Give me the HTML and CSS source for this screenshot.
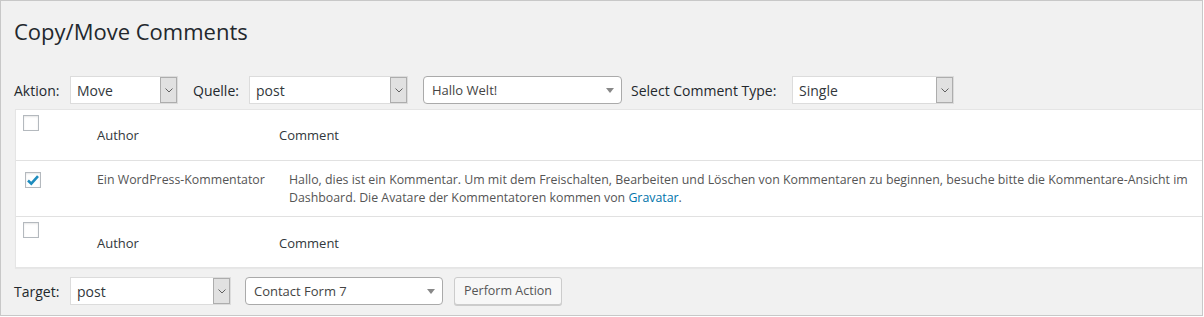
FILE: index.html
```html
<!DOCTYPE html>
<html lang="de">

<head>
    <meta charset="UTF-8">
    <title>Copy/Move Comments</title>
    <link rel="stylesheet" href="styles.css">
</head>

<body>

    <div class="wrap">
        <h1>Copy/Move Comments</h1>

        <div class="toolbar top">
            <label class="lbl lbl-aktion">Aktion:</label>
            <div class="select w-move"><span>Move</span><span class="arrow"><svg width="8" height="5" viewBox="0 0 8 5"><path d="M0.5 0.5 L4 4 L7.5 0.5" fill="none" stroke="#606060" stroke-width="1"/></svg></span></div>

            <label class="lbl lbl-quelle">Quelle:</label>
            <div class="select w-post"><span>post</span><span class="arrow"><svg width="8" height="5" viewBox="0 0 8 5"><path d="M0.5 0.5 L4 4 L7.5 0.5" fill="none" stroke="#606060" stroke-width="1"/></svg></span></div>

            <div class="select2 w-hallo"><span>Hallo Welt!</span><span class="tri"></span></div>

            <label class="lbl lbl-type">Select Comment Type:</label>
            <div class="select w-single"><span>Single</span><span class="arrow"><svg width="8" height="5" viewBox="0 0 8 5"><path d="M0.5 0.5 L4 4 L7.5 0.5" fill="none" stroke="#606060" stroke-width="1"/></svg></span></div>
        </div>

        <div class="table">
            <div class="row head">
                <div class="cell check"><span class="box"></span></div>
                <div class="cell author">Author</div>
                <div class="cell comment">Comment</div>
            </div>
            <div class="row item">
                <div class="cell check"><span class="box checked"><svg width="14" height="12" viewBox="0 0 14 12"><path d="M2 6.5 L5.3 9.6 L12 2.2" fill="none" stroke="#1e8cbe" stroke-width="2.6"/></svg></span></div>
                <div class="cell author">Ein WordPress-Kommentator</div>
                <div class="cell comment">Hallo, dies ist ein Kommentar. Um mit dem Freischalten, Bearbeiten und Löschen von Kommentaren zu beginnen, besuche bitte die Kommentare-Ansicht im Dashboard. Die Avatare der Kommentatoren kommen von <a href="#">Gravatar</a>.</div>
            </div>
            <div class="row foot">
                <div class="cell check"><span class="box"></span></div>
                <div class="cell author">Author</div>
                <div class="cell comment">Comment</div>
            </div>
        </div>

        <div class="toolbar bottom">
            <label class="lbl lbl-target">Target:</label>
            <div class="select w-target"><span>post</span><span class="arrow"><svg width="8" height="5" viewBox="0 0 8 5"><path d="M0.5 0.5 L4 4 L7.5 0.5" fill="none" stroke="#606060" stroke-width="1"/></svg></span></div>

            <div class="select2 w-form"><span>Contact Form 7</span><span class="tri"></span></div>

            <button class="action">Perform Action</button>
        </div>
    </div>

</body>

</html>
```

FILE: styles.css
```css
html {
    font-family: "Open Sans", "Noto Sans", sans-serif;
}

body {
    margin: 0;
    background: #ffffff;
}

.wrap {
    width: 1203px;
    height: 316px;
    box-sizing: border-box;
    border: 1px solid #c8c8c8;
    background: #f1f1f1;
    overflow: hidden;
}

h1 {
    font-size: 22px;
    font-weight: 400;
    color: #23282d;
    line-height: 29px;
    margin: 0;
    padding: 16px 0 0 13px;
}

.toolbar {
    display: flex;
    align-items: center;
    padding-left: 13px;
    color: #23282d;
    font-size: 14px;
}

.top {
    margin-top: 30px;
}

.bottom {
    margin-top: 9px;
}

.lbl {
    white-space: nowrap;
}

.lbl-aktion { width: 56px; }
.lbl-quelle { width: 56px; margin-left: 15px; }
.lbl-type { width: 161px; margin-left: 9px; }
.lbl-target { width: 56px; }

.select {
    display: flex;
    align-items: center;
    justify-content: space-between;
    height: 28px;
    box-sizing: border-box;
    border: 1px solid #dcdcdc;
    background: #ffffff;
    font-size: 14px;
    color: #32373c;
    padding-left: 6px;
}

.select span {
    padding-top: 1px;
}

.select .arrow {
    display: flex;
    align-items: center;
    justify-content: center;
    width: 17px;
    height: 26px;
    box-sizing: border-box;
    border: 1px solid #adadad;
    background: #e1e1e1;
    padding: 0;
}

.w-move { width: 108px; }
.w-post { width: 159px; }
.w-single { width: 162px; }
.w-target { width: 161px; }

.select2 {
    position: relative;
    height: 28px;
    box-sizing: border-box;
    border: 1px solid #aaaaaa;
    border-radius: 4px;
    background: #ffffff;
    font-size: 13px;
    color: #444444;
    padding-left: 8px;
    display: flex;
    align-items: center;
    margin-top: -1px;
}

.select2 .tri {
    position: absolute;
    right: 7px;
    top: 11px;
    width: 0;
    height: 0;
    border-left: 4px solid transparent;
    border-right: 4px solid transparent;
    border-top: 5px solid #888888;
}

.w-hallo { width: 199px; margin-left: 15px; }
.w-form { width: 198px; margin-left: 14px; }

.action {
    margin-left: 11px;
    width: 108px;
    height: 28px;
    margin-top: -1px;
    padding: 0;
    font-family: "Open Sans", "Noto Sans", sans-serif;
    font-size: 12.5px;
    color: #555555;
    background: #f7f7f7;
    border: 1px solid #cccccc;
    border-radius: 3px;
    box-shadow: 0 1px 0 #cccccc;
}

.table {
    margin: 5px 0 0 14px;
    background: #ffffff;
    border: 1px solid #e5e5e5;
    border-right: 0;
    box-shadow: 0 1px 1px rgba(0, 0, 0, 0.04);
    font-size: 13px;
}

.row {
    display: flex;
}

.row + .row {
    border-top: 1px solid #e1e1e1;
}

.cell {
    box-sizing: border-box;
}

.check {
    width: 71px;
    padding-left: 7px;
}

.author {
    width: 182px;
    padding-left: 10px;
    white-space: nowrap;
}

.comment {
    flex: 1;
    padding-left: 10px;
    padding-right: 8px;
}

.head, .foot {
    height: 50px;
    color: #32373c;
    line-height: 20px;
}

.head .author, .head .comment {
    padding-top: 15px;
}

.foot .author, .foot .comment {
    padding-top: 16px;
}

.head .check { padding-top: 5px; }
.foot .check { padding-top: 5px; }

.item {
    height: 55px;
    color: #555555;
    line-height: 18px;
    font-size: 12.35px;
}

.item .cell {
    padding-top: 10px;
}

.item .check {
    padding-left: 9px;
    padding-top: 11px;
}

.item .comment {
    padding-left: 20px;
}

.box {
    display: flex;
    align-items: center;
    justify-content: center;
    width: 16px;
    height: 16px;
    box-sizing: border-box;
    border: 1px solid #b4b9be;
    background: #ffffff;
    box-shadow: inset 0 1px 2px rgba(0, 0, 0, 0.1);
}

a {
    color: #0073aa;
    text-decoration: none;
}
```
